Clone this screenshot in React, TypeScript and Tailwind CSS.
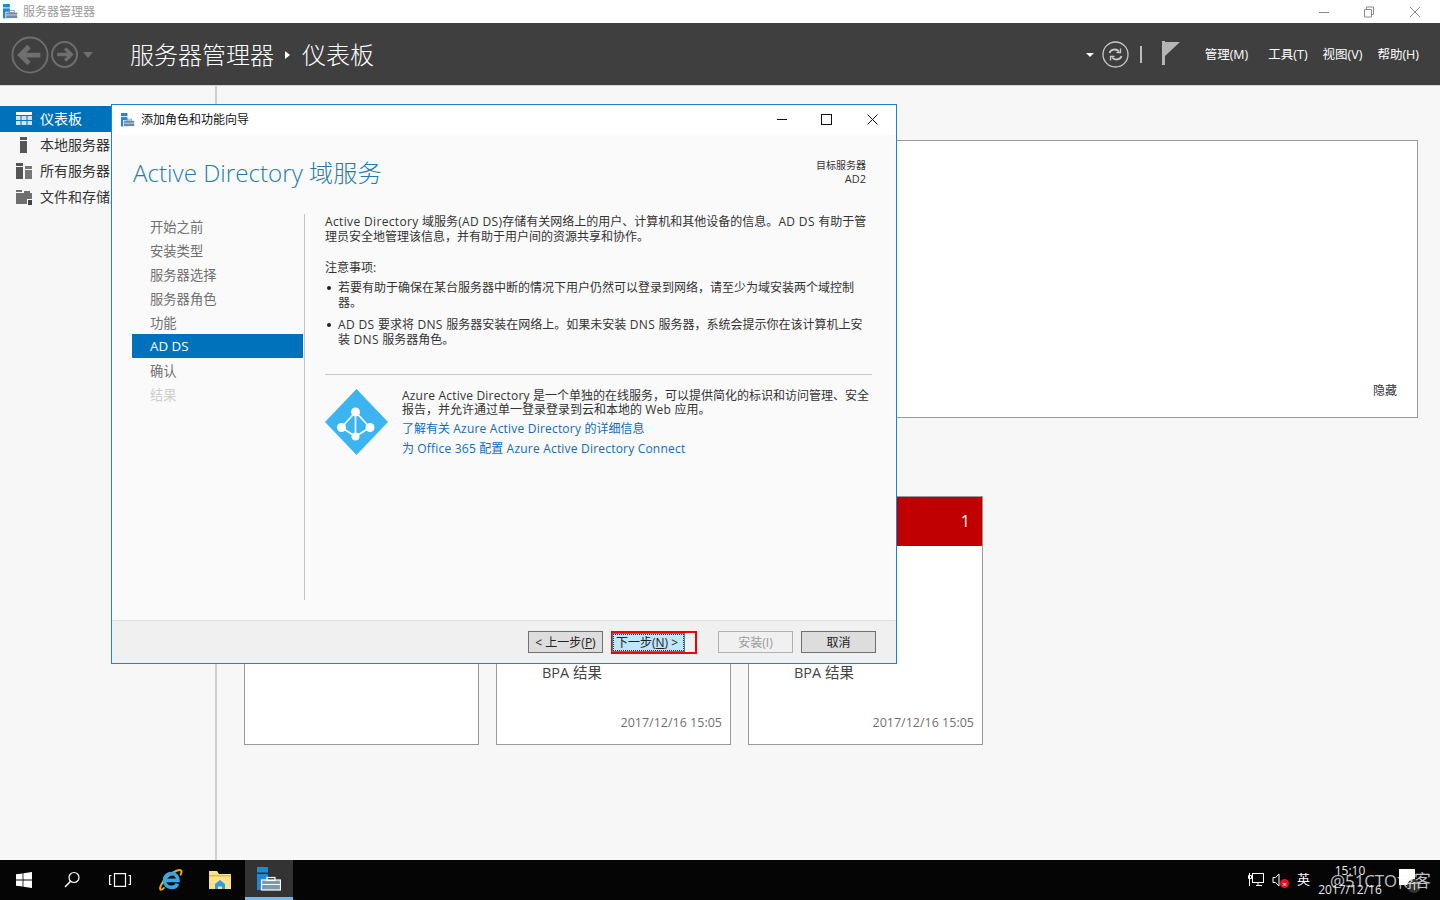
import type { ReactNode } from "react";

const ServerIcon = ({ size = 16, light = false }: { size?: number; light?: boolean }) => (
  <svg width={size} height={size} viewBox="0 0 24 24">
    <rect x="0" y="0" width="11" height="5.500" fill="#1e88d8" />
    <rect x="0" y="7" width="11" height="16" fill="#1e88d8" />
    <rect x="4.500" y="13" width="19" height="10" fill={light ? "#7d97ad" : "#6f8ba3"} stroke="#fff" strokeWidth="1.200" />
    <rect x="10" y="10.500" width="8" height="3" fill="none" stroke={light ? "#fff" : "#6f8ba3"} strokeWidth="1.200" />
    <path d="M4.500 17.500h19" stroke="#fff" strokeWidth="1" />
  </svg>
);

const NavCircle = ({ size, dir }: { size: number; dir: "left" | "right" }) => (
  <svg width={size} height={size} viewBox="0 0 40 40" fill="none" stroke="#6e6e6e">
    <circle cx="20" cy="20" r="18.500" strokeWidth={size > 30 ? 2 : 3} />
    {dir === "left" ? (
      <path d="M31 20H11M19 11l-9 9 9 9" strokeWidth="5" />
    ) : (
      <path d="M9 20h20M21 11l9 9-9 9" strokeWidth="5" />
    )}
  </svg>
);

// latin runs in the body copy are a touch wider than the fallback font
const L = ({ children }: { children: ReactNode }) => <span className="tracking-[0.35px]">{children}</span>;
const Az = ({ children }: { children: ReactNode }) => <span className="tracking-[0.2px]">{children}</span>;

const sideItems: { label: string; active?: boolean; icon: ReactNode }[] = [
  {
    label: "仪表板",
    active: true,
    icon: (
      <svg width="16" height="16" viewBox="0 0 16 16">
        <rect y="1" width="16" height="3" fill="#fff" />
        <path d="M0 5h4.500v4H0zM5.500 5h5v4h-5zM11.500 5H16v4h-4.500zM0 10h4.500v4H0zM5.500 10h5v4h-5zM11.500 10H16v4h-4.500z" fill="#cfe3f2" />
      </svg>
    ),
  },
  {
    label: "本地服务器",
    icon: (
      <svg width="16" height="16" viewBox="0 0 16 16">
        <rect x="4" y="0" width="7" height="3" fill="#555" />
        <rect x="4" y="4" width="7" height="12" fill="#555" />
      </svg>
    ),
  },
  {
    label: "所有服务器",
    icon: (
      <svg width="16" height="16" viewBox="0 0 16 16">
        <rect y="0" width="7" height="3" fill="#555" />
        <rect y="4" width="7" height="12" fill="#555" />
        <rect x="9" y="3" width="7" height="3" fill="#777" />
        <rect x="9" y="7" width="7" height="9" fill="#777" />
      </svg>
    ),
  },
  {
    label: "文件和存储服务",
    icon: (
      <svg width="16" height="16" viewBox="0 0 16 16">
        <path d="M0 1h6v2H0zM8 2h6v2H8zM0 4h16v11H0z" fill="#6f6f6f" />
        <path d="M11 10h5v6h-5z" fill="#fff" />
        <path d="M12 11h4v5h-4z" fill="#444" />
      </svg>
    ),
  },
];

const steps = ["开始之前", "安装类型", "服务器选择", "服务器角色", "功能", "AD DS", "确认", "结果"];

const Card = ({ red, count, last }: { red?: boolean; count?: string; last?: string }) => (
  <div className="flex h-[249px] w-[235px] flex-col border border-[#999] bg-white">
    <div className={`flex h-[49px] shrink-0 items-center justify-end pb-px pr-[12px] text-[16px] text-white ${red ? "bg-[#c00000]" : "bg-white"}`}>
      {count}
    </div>
    {last && (
      <div className="flex flex-1 flex-col pb-[13px] pl-[45px] pr-[8px] pt-[119px]">
        <div className="text-[14.500px] leading-[16px] text-[#444]">BPA 结果</div>
        <div className="mt-auto text-right text-[12.500px] leading-[16px] text-[#707070]">{last}</div>
      </div>
    )}
  </div>
);

const WizardButton = ({ children, disabled }: { children: ReactNode; disabled?: boolean }) => (
  <button
    className={`block h-[22px] w-[75px] border pt-px text-center text-[12px] leading-[20px] ${
      disabled ? "border-[#adb2b5] bg-[#f0f0f0] text-[#9a9a9a]" : "border-[#707070] bg-[#dddddd] text-[#222]"
    }`}
  >
    {children}
  </button>
);

const Bullet = () => (
  <span className="w-[13px] shrink-0 pl-[2px] pt-[6px]">
    <span className="block h-[4px] w-[4px] rounded-full bg-[#222]" />
  </span>
);

const Wizard = () => (
  <div className="absolute left-[111px] top-[104px] flex h-[560px] w-[786px] flex-col border border-[#1883d7] bg-[#fafafa]">
    <div className="flex h-[30px] shrink-0 items-center bg-white pl-[9px]">
      <ServerIcon size={14} />
      <span className="ml-[6px] text-[12px] text-[#111]">添加角色和功能向导</span>
      <div className="ml-auto flex -translate-y-px items-center">
        <svg width="46" height="16" viewBox="0 0 46 16" fill="none" stroke="#111" strokeWidth="1">
          <path d="M17 8.500h10" />
        </svg>
        <svg width="44" height="16" viewBox="0 0 44 16" fill="none" stroke="#111" strokeWidth="1">
          <rect x="15.500" y="3.500" width="10" height="10" />
        </svg>
        <svg width="46" height="16" viewBox="0 0 46 16" fill="none" stroke="#111" strokeWidth="1">
          <path d="M17.500 3.500l10 10M27.500 3.500l-10 10" />
        </svg>
      </div>
    </div>
    <div className="flex h-[79px] shrink-0 items-start justify-between pl-[21px] pr-[30px]">
      <h1 className="mt-[21px] text-[24.200px] font-light leading-[34px] text-[#1f7cae]">Active Directory 域服务</h1>
      <div className="mt-[24px] text-right text-[10px] leading-[13px] text-[#333]">
        <div>目标服务器</div>
        <div className="text-[11px]">AD2</div>
      </div>
    </div>
    <div className="flex flex-1 pl-[20px]">
      <div className="h-[386px] w-[173px] border-r border-[#c4c4c4]">
        {steps.map((s, i) => (
          <div
            key={s}
            className={`h-[24px] w-[171px] pl-[18px] text-[13.300px] leading-[24px] ${
              s === "AD DS" ? "bg-[#0072bc] text-white" : i === 7 ? "pt-px text-[#cfcfcf]" : "pt-px text-[#707070]"
            }`}
          >
            {s}
          </div>
        ))}
      </div>
      <div className="ml-[20px] w-[547px] text-[12px] leading-[15px] text-[#333]">
        <p>
          <L>Active Directory </L>域服务<L>(AD DS)</L>存储有关网络上的用户、计算机和其他设备的信息。<L>AD DS </L>有助于管
          <br />
          理员安全地管理该信息，并有助于用户间的资源共享和协作。
        </p>
        <p className="mt-[16px]">注意事项:</p>
        <ul className="mt-[5px]">
          <li className="flex">
            <Bullet />
            <span>
              若要有助于确保在某台服务器中断的情况下用户仍然可以登录到网络，请至少为域安装两个域控制
              <br />
              器。
            </span>
          </li>
          <li className="mt-[7px] flex">
            <Bullet />
            <span>
              <L>AD DS </L>要求将<L> DNS </L>服务器安装在网络上。如果未安装<L> DNS </L>服务器，系统会提示你在该计算机上安
              <br />
              装<L> DNS </L>服务器角色。
            </span>
          </li>
        </ul>
        <div className="mt-[27px] flex border-t border-[#c8c8c8] pt-[14px]">
          <svg width="64" height="66" viewBox="0 0 64 66" className="shrink-0">
            <path d="M31.500 0L63 33 31.500 66 0 33z" fill="#3bb4ef" />
            <g stroke="#fff" strokeWidth="1.600" fill="none">
              <path d="M30.500 23L16.500 38.500 30.500 47.500 45 38.500zM30.500 23v24.500" />
            </g>
            <g fill="#fff">
              <circle cx="30.500" cy="23" r="4.500" />
              <circle cx="16.500" cy="38.500" r="4.500" />
              <circle cx="45" cy="38.500" r="4.500" />
              <circle cx="30.500" cy="47.500" r="4" />
            </g>
          </svg>
          <div className="ml-[13px] whitespace-nowrap">
            <p className="leading-[14px]">
              <Az>Azure Active Directory </Az>是一个单独的在线服务，可以提供简化的标识和访问管理、安全
              <br />
              报告，并允许通过单一登录登录到云和本地的<Az> Web </Az>应用。
            </p>
            <p className="mt-[4px] text-[#0f6cbd]">
              了解有关<Az> Azure Active Directory </Az>的详细信息
            </p>
            <p className="mt-[5px] text-[#0f6cbd]">
              为<Az> Office 365 </Az>配置<Az> Azure Active Directory Connect</Az>
            </p>
          </div>
        </div>
      </div>
    </div>
    <div className="flex h-[43px] shrink-0 items-start justify-end border-t border-[#dfdfdf] bg-[#f0f0f0] pr-[20px] pt-[10px]">
      <WizardButton>{"<  "}上一步(<u>P</u>)</WizardButton>
      <div className="ml-[8px] h-[23px] w-[86px] border-2 border-[#f00000]">
        <button className="-ml-px block h-[19px] w-[73px] border border-[#3c7fb1] bg-[#bee6fd] text-left text-[12px] leading-[17px] text-[#222] outline-1 -outline-offset-2 outline-dotted outline-[#333]">
          <span className="ml-[3px]">下一步(<u>N</u>) {">"}</span>
        </button>
      </div>
      <div className="ml-[21px]">
        <WizardButton disabled>安装(I)</WizardButton>
      </div>
      <div className="ml-[8px]">
        <WizardButton>取消</WizardButton>
      </div>
    </div>
  </div>
);

const Taskbar = () => (
  <div className="flex h-[40px] shrink-0 items-center bg-[#050505] text-white">
    <div className="flex w-[48px] justify-center">
      <svg width="16" height="16" viewBox="0 0 16 16" fill="#fff">
        <path d="M0 2.300l6.600-.9v6.200H0zM7.400 1.300L16 0v7.600H7.400zM0 8.400h6.600v6.200L0 13.700zM7.400 8.400H16V16l-8.600-1.300z" />
      </svg>
    </div>
    <div className="flex w-[48px] justify-center">
      <svg width="18" height="18" viewBox="0 0 18 18" fill="none" stroke="#fff" strokeWidth="1.200">
        <circle cx="11" cy="6.500" r="5" />
        <path d="M7.500 10.200L2 16" strokeWidth="1.500" />
      </svg>
    </div>
    <div className="flex w-[48px] justify-center">
      <svg width="22" height="14" viewBox="0 0 22 14" fill="none" stroke="#fff" strokeWidth="1.200">
        <rect x="5.500" y="0.600" width="11" height="12.800" />
        <path d="M2.500 2.500H.6v9h1.900M19.500 2.500h1.900v9h-1.900" />
      </svg>
    </div>
    <div className="ml-[3px] flex w-[48px] justify-center">
      <svg width="24" height="24" viewBox="0 0 26 26" fill="none">
        <path d="M6 21C2 25 0 24 2 19 4 14 11 6 19 3c5-2 7 0 4 5" stroke="#e8a820" strokeWidth="2.200" />
        <path d="M7 13.500h13.500c0-4.500-3-7.500-7-7.500s-7.500 3-7.500 7.500 3 7.500 7.500 7.500c3 0 5.500-1.500 6.500-4" stroke="#35a8ea" strokeWidth="4" />
      </svg>
    </div>
    <div className="ml-px flex w-[48px] justify-center">
      <svg width="22" height="18" viewBox="0 0 22 18">
        <path d="M0 0h8l2 3h12v15H0z" fill="#fbe38e" />
        <path d="M0 4h22v1.500H0z" fill="#e8b93c" />
        <path d="M6 13l5-4 5 4v5h-3v-2.500H9V18H6z" fill="#2f9fe0" />
      </svg>
    </div>
    <div className="ml-px flex h-[40px] w-[48px] flex-col items-center justify-center border-b-[3px] border-[#76b9ed] bg-[#333]">
      <ServerIcon size={24} light />
    </div>
    <div className="ml-auto flex items-center">
      <svg width="16" height="16" viewBox="0 0 16 16" fill="none" stroke="#fff" strokeWidth="1">
        <rect x="4.500" y="1.500" width="11" height="9" />
        <path d="M8 13.500h6M10 11v2.500M1.500 1v13M.5 3.500h3v3h-3z" />
      </svg>
      <div className="relative ml-[8px] h-[16px] w-[16px]">
        <svg width="16" height="16" viewBox="0 0 16 16" fill="none" stroke="#fff" strokeWidth="1">
          <path d="M1 5.500h2.500L7 2v12l-3.500-3.500H1z" />
        </svg>
        <span className="absolute bottom-0 right-[-1px] flex h-[9px] w-[9px] items-center justify-center rounded-full bg-[#e81123] text-[8px] leading-none">×</span>
      </div>
      <span className="ml-[9px] text-[13px]">英</span>
      <div className="ml-[7px] w-[66px] pt-px text-center text-[12px] leading-[18px] text-[#e8e8e8]">
        <div>15:10</div>
        <div className="mt-px">2017/12/16</div>
      </div>
      <div className="relative ml-[16px] mr-[25px] h-[16px] w-[16px] -translate-y-[3px] bg-white">
        <span className="absolute -right-[6px] top-[10px] flex h-[14px] w-[14px] items-center justify-center rounded-full bg-[#333] text-[10px] leading-none">1</span>
      </div>
    </div>
  </div>
);

export default function App() {
  return (
    <div className="relative flex h-[900px] w-[1440px] flex-col overflow-hidden bg-[#f7f7f7] font-['Open_Sans','Noto_Sans_CJK_SC',sans-serif]">
      <div className="flex h-[23px] shrink-0 items-center bg-white pl-[3px]">
        <ServerIcon size={15} />
        <span className="ml-[5px] text-[12px] text-[#9a9a9a]">服务器管理器</span>
        <div className="ml-auto flex items-center pr-[19px]">
          <svg width="12" height="12" viewBox="0 0 12 12" fill="none" stroke="#8a8a8a">
            <path d="M1 6.500h10" />
          </svg>
          <svg width="12" height="12" viewBox="0 0 12 12" fill="none" stroke="#8a8a8a" className="ml-[33px]">
            <path d="M1.500 3.500h7v7.500h-7zM3.500 3.500V1h7v7.500H8.500" />
          </svg>
          <svg width="12" height="12" viewBox="0 0 12 12" fill="none" stroke="#8a8a8a" className="ml-[34px]">
            <path d="M1 1l10 10M11 1L1 11" />
          </svg>
        </div>
      </div>

      <div className="flex h-[62px] shrink-0 items-center bg-[#3f3f3f] pl-[11px] pt-[1px] text-white">
        <NavCircle size={38} dir="left" />
        <div className="ml-[2px]">
          <NavCircle size={27} dir="right" />
        </div>
        <span className="ml-[5px] h-0 w-0 border-x-[5px] border-t-[6px] border-x-transparent border-t-[#6e6e6e]" />
        <span className="ml-[37px] text-[24px] font-light">服务器管理器</span>
        <span className="ml-[11px] h-0 w-0 border-y-[4px] border-l-[5px] border-y-transparent border-l-white" />
        <span className="ml-[12px] text-[24px] font-light">仪表板</span>
        <div className="ml-auto flex items-center pr-[21px] text-[12.500px]">
          <span className="h-0 w-0 border-x-[4px] border-t-[4px] border-x-transparent border-t-white" />
          <svg width="27" height="27" viewBox="0 0 27 27" fill="none" stroke="#c8c8c8" className="ml-[8px]">
            <circle cx="13.500" cy="13.500" r="12.500" strokeWidth="1.300" />
            <path d="M7.500 12c1-3.500 6.500-5 9.500-1.500M19.500 15c-1 3.500-6.500 5-9.500 1.500" strokeWidth="1.800" />
            <path d="M18.500 7.500v4h-4M8.500 19.500v-4h4" strokeWidth="1.300" />
          </svg>
          <span className="ml-[11px] h-[17px] w-[2px] bg-[#bbb]" />
          <svg width="18" height="24" viewBox="0 0 18 24" className="ml-[20px] -translate-y-[2px]">
            <rect width="3" height="24" fill="#b5b5b5" />
            <path d="M3 1h15L3 15z" fill="#b5b5b5" />
          </svg>
          <div className="ml-[25px] flex gap-[15px] pt-[2px]">
            <span className="mr-[5px]">管理(M)</span>
            <span>工具(T)</span>
            <span>视图(V)</span>
            <span>帮助(H)</span>
          </div>
        </div>
      </div>

      <div className="flex min-h-0 flex-1 border-t border-[#d4d4d4]">
        <aside className="w-[217px] shrink-0 border-r-2 border-[#cfcfcf] pt-[20px]">
          {sideItems.map((it) => (
            <div
              key={it.label}
              className={`flex h-[26px] items-center pl-[16px] text-[14px] ${it.active ? "bg-[#0072bc] text-white" : "text-[#333]"}`}
            >
              {it.icon}
              <span className="ml-[8px] whitespace-nowrap pb-[2px]">{it.label}</span>
            </div>
          ))}
        </aside>
        <main className="flex-1 pl-[27px] pt-[54px]">
          <div className="flex h-[278px] w-[1174px] items-end justify-end border border-[#999] bg-white pb-[17px] pr-[20px] text-[12px] text-[#333]">
            隐藏
          </div>
          <div className="mt-[78px] flex gap-[17px]">
            <Card />
            <Card last="2017/12/16 15:05" />
            <Card red count="1" last="2017/12/16 15:05" />
          </div>
        </main>
      </div>

      <Taskbar />
      <Wizard />
      <span className="pointer-events-none absolute left-[1330px] top-[869px] text-[16.800px] leading-[24px] text-white/75">@51CTO博客</span>
    </div>
  );
}
